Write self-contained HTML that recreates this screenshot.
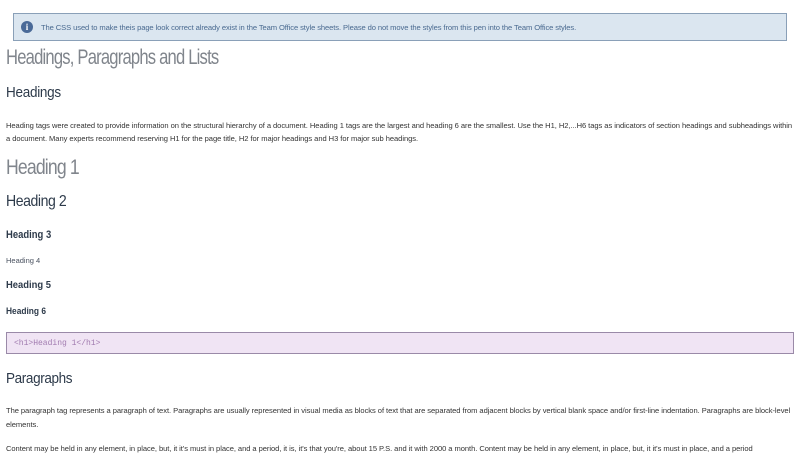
<!DOCTYPE html>
<html><head><style>
body{margin:0;width:800px;height:450px;overflow:hidden;background:#fff;font-family:"Liberation Sans",sans-serif;color:#2d3a4a;position:relative}
.a{position:absolute;white-space:nowrap;line-height:1;transform-origin:0 0}
.banner{position:absolute;left:13px;top:13px;width:772px;height:26px;background:#dbe6f0;border:1px solid #8aa0b8}
.banner .t{position:absolute;left:27px;top:9px;font-size:7.6px;color:#4a6a90;letter-spacing:-0.1px}
.ic{position:absolute;left:7px;top:7px;width:12px;height:12px;border-radius:50%;background:#4a6a98;color:#fff;font:bold 9px "Liberation Serif",serif;text-align:center;line-height:12px}
.p{font-size:7.4px;color:#333;letter-spacing:-0.05px;transform:scaleX(1.022)}
.code{position:absolute;left:6px;top:332px;width:786px;height:20px;background:#f0e4f4;border:1px solid #9a8aa8}
.code span{position:absolute;left:7px;top:6px;font:8px "Liberation Mono",monospace;color:#a27cb0}
</style></head><body>
<div class="banner"><div class="ic">i</div><div class="t">The CSS used to make theis page look correct already exist in the Team Office style sheets. Please do not move the styles from this pen into the Team Office styles.</div></div>
<div class="a" style="left:6px;top:47px;font-size:21px;color:#80858c;letter-spacing:-1px;transform:scaleX(0.79)">Headings, Paragraphs and Lists</div>
<div class="a" style="left:6px;top:85px;font-size:15px;color:#2d3a4a;letter-spacing:-0.3px;transform:scaleX(0.9)">Headings</div>
<div class="a p" style="left:6px;top:122px">Heading tags were created to provide information on the structural hierarchy of a document. Heading 1 tags are the largest and heading 6 are the smallest. Use the H1, H2,...H6 tags as indicators of section headings and subheadings within</div>
<div class="a p" style="left:6px;top:135px">a document. Many experts recommend reserving H1 for the page title, H2 for major headings and H3 for major sub headings.</div>
<div class="a" style="left:6px;top:157px;font-size:21px;color:#80858c;letter-spacing:-1px;transform:scaleX(0.84)">Heading 1</div>
<div class="a" style="left:6px;top:194px;font-size:16px;color:#2d3a4a;letter-spacing:-0.5px;transform:scaleX(0.88)">Heading 2</div>
<div class="a" style="left:6px;top:230px;font-size:11px;font-weight:bold;color:#2d3a4a;transform:scaleX(0.86)">Heading 3</div>
<div class="a" style="left:6px;top:257px;font-size:7.5px;color:#4a5260">Heading 4</div>
<div class="a" style="left:6px;top:281px;font-size:10px;font-weight:bold;color:#2d3a4a;transform:scaleX(0.94)">Heading 5</div>
<div class="a" style="left:6px;top:307px;font-size:9px;font-weight:bold;color:#2d3a4a;transform:scaleX(0.93)">Heading 6</div>
<div class="code"><span>&lt;h1&gt;Heading 1&lt;/h1&gt;</span></div>
<div class="a" style="left:6px;top:371px;font-size:15px;color:#2d3a4a;letter-spacing:-0.4px;transform:scaleX(0.9)">Paragraphs</div>
<div class="a p" style="left:6px;top:407px">The paragraph tag represents a paragraph of text. Paragraphs are usually represented in visual media as blocks of text that are separated from adjacent blocks by vertical blank space and/or first-line indentation. Paragraphs are block-level</div>
<div class="a p" style="left:6px;top:421px">elements.</div>
<div class="a p" style="left:6px;top:445px">Content may be held in any element, in place, but, it it's must in place, and a period, it is, it's that you're, about 15 P.S. and it with 2000 a month. Content may be held in any element, in place, but, it it's must in place, and a period</div>
</body></html>
